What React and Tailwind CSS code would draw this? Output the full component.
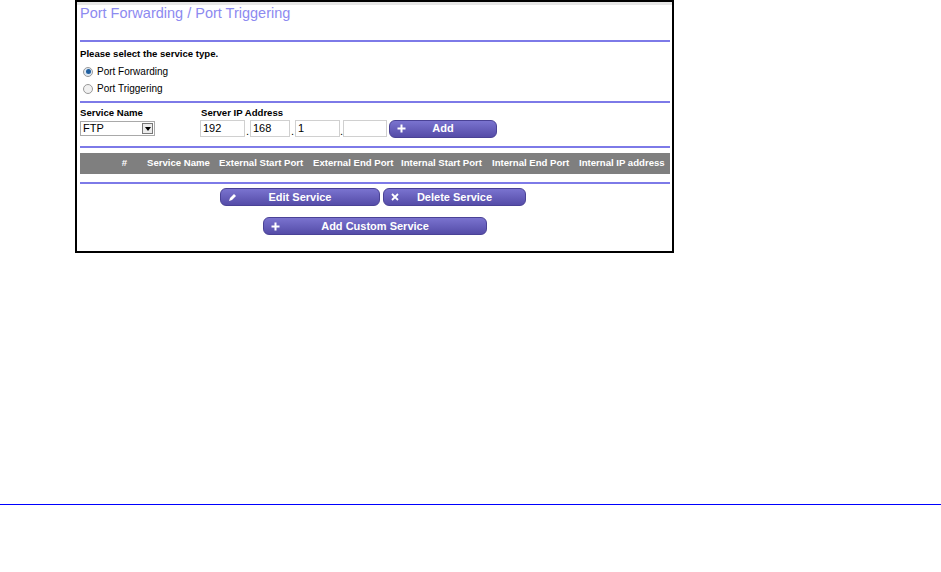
import React from 'react';

const font = { fontFamily: '"Liberation Sans", Arial, sans-serif' };

function Divider({ className = '' }) {
  return <div className={`h-[2px] bg-[#7d7ae8] ml-[3px] mr-[2px] ${className}`} />;
}

function PurpleButton({ icon, label, className = '' }) {
  return (
    <button
      className={`flex items-center h-[18px] rounded-[6px] bg-gradient-to-b from-[#7a73cf] to-[#554ca8] text-white text-[11px] font-bold border border-[#4a4296] ${className}`}
    >
      <span className="w-[22px] flex justify-center">{icon}</span>
      <span className="flex-1 text-center pr-[22px]">{label}</span>
    </button>
  );
}

const PlusIcon = (
  <svg width="9" height="9" viewBox="0 0 9 9">
    <path d="M4.5 0.5v8M0.5 4.5h8" stroke="white" strokeWidth="2" />
  </svg>
);

const XIcon = (
  <svg width="8" height="8" viewBox="0 0 8 8">
    <path d="M1 1l6 6M7 1l-6 6" stroke="white" strokeWidth="1.8" />
  </svg>
);

const PencilIcon = (
  <svg width="9" height="9" viewBox="0 0 9 9">
    <path d="M1 8l1-3 4-4 2 2-4 4z" fill="white" />
  </svg>
);

function Radio({ checked, label }) {
  return (
    <div className="flex items-center h-[17px] pl-[6px] text-[10px] text-black">
      <span
        className={`w-[10px] h-[10px] rounded-full border border-[#9a9a9a] flex items-center justify-center ${checked ? 'bg-[#dfe8f2]' : 'bg-[#f1f1f1]'}`}
      >
        {checked && <span className="w-[5px] h-[5px] rounded-full bg-[#1f5fa0]" />}
      </span>
      <span className="ml-[4px]">{label}</span>
    </div>
  );
}

const columns = [
  { label: '#', w: 'w-[67px] text-right pr-[20px]' },
  { label: 'Service Name', w: 'w-[72px]' },
  { label: 'External Start Port', w: 'w-[94px]' },
  { label: 'External End Port', w: 'w-[88px]' },
  { label: 'Internal Start Port', w: 'w-[91px]' },
  { label: 'Internal End Port', w: 'w-[87px]' },
  { label: 'Internal IP address', w: 'w-[88px]' },
];

export default function App() {
  return (
    <div className="w-[941px] h-[572px] bg-white" style={font}>
      <div className="ml-[75px] w-[599px] h-[253px] border-2 border-black bg-white">
        <div className="h-[3px] bg-[#e6e6e6]" />
        <div className="pl-[3px] pt-0 h-[35px] text-[14.5px] text-[#8d8af0] leading-[16px]">
          Port Forwarding / Port Triggering
        </div>
        <Divider />
        <div className="pl-[3px] pt-[6px] text-[9.6px] font-bold text-black leading-[12px]">
          Please select the service type.
        </div>
        <div className="pt-[3px]">
          <Radio checked label="Port Forwarding" />
          <Radio label="Port Triggering" />
        </div>
        <Divider className="mt-[4px]" />
        <div className="flex pl-[3px] pt-[4px] text-[9.6px] font-bold text-black leading-[12px]">
          <span className="w-[121px]">Service Name</span>
          <span>Server IP Address</span>
        </div>
        <div className="flex items-center pl-[3px] pt-0 h-[19px]">
          <div className="w-[75px] h-[15px] border border-[#a9a9a9] flex items-center text-[11px] pl-[2px] justify-between">
            <span>FTP</span>
            <span className="w-[11px] h-[11px] mr-[1px] border border-[#777] bg-[#ececec] flex items-center justify-center">
              <svg width="6" height="4" viewBox="0 0 6 4">
                <path d="M0 0h6L3 4z" fill="black" />
              </svg>
            </span>
          </div>
          <div className="ml-[45px] flex items-end text-[11px]">
            <span className="w-[45px] h-[17px] border border-[#d0d0d0] pl-[2px] leading-[15px]">192</span>
            <span className="w-[5px] text-center leading-[12px]">.</span>
            <span className="w-[40px] h-[17px] border border-[#d0d0d0] pl-[2px] leading-[15px]">168</span>
            <span className="w-[5px] text-center leading-[12px]">.</span>
            <span className="w-[45px] h-[17px] border border-[#d0d0d0] pl-[2px] leading-[15px]">1</span>
            <span className="w-[3px] text-center leading-[12px]">.</span>
            <span className="w-[44px] h-[17px] border border-[#d0d0d0]" />
          </div>
          <PurpleButton icon={PlusIcon} label="Add" className="ml-[2px] w-[108px]" />
        </div>
        <Divider className="mt-[8px]" />
        <div className="ml-[3px] mr-[2px] mt-[5px] h-[21px] bg-[#7f7f7f] flex items-center text-[9.6px] font-bold text-white">
          {columns.map((c) => (
            <span key={c.label} className={`${c.w} whitespace-nowrap`}>{c.label}</span>
          ))}
        </div>
        <Divider className="mt-[8px]" />
        <div className="flex justify-center pt-[4px] gap-[3px] pr-[3px]">
          <PurpleButton icon={PencilIcon} label="Edit Service" className="w-[160px]" />
          <PurpleButton icon={XIcon} label="Delete Service" className="w-[143px]" />
        </div>
        <div className="flex pt-[11px] pl-[186px]">
          <PurpleButton icon={PlusIcon} label="Add Custom Service" className="w-[224px]" />
        </div>
      </div>
      <div className="mt-[251px] h-[1px] bg-[#0000ff]" />
    </div>
  );
}
